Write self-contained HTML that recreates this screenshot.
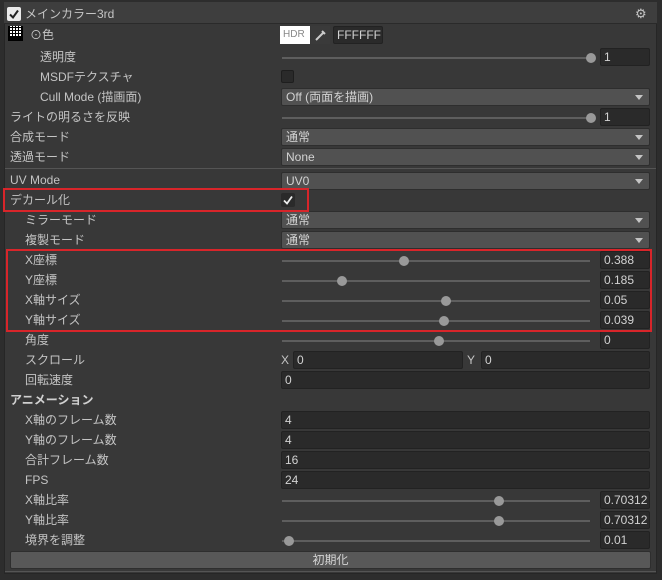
<!DOCTYPE html>
<html><head><meta charset="utf-8"><style>
*{margin:0;padding:0;box-sizing:border-box}
body{width:662px;height:580px;background:#2d2d2d;overflow:hidden;position:relative;font-family:"Liberation Sans","Noto Sans CJK JP",sans-serif;font-size:12px;color:#c4c4c4}
.panel{position:absolute;left:4px;top:2px;width:653px;height:572px;background:#383838;border:1px solid #262626}
.hdr{position:absolute;left:4px;top:2px;width:653px;height:22px;background:#3e3e3e;border-bottom:1px solid #2a2a2a}
.a{position:absolute;white-space:nowrap}
.lab{position:absolute;line-height:20px;height:20px}
.track{position:absolute;height:2px;background:#5e5e5e}
.knob{position:absolute;width:10px;height:10px;border-radius:50%;background:#999}
.fld{position:absolute;height:18px;background:#2a2a2a;border:1px solid #222;border-radius:2px;line-height:16px;padding-left:3px;color:#d2d2d2}
.dd{position:absolute;height:18px;background:#515151;border:1px solid #2e2e2e;border-radius:2px;line-height:16px;padding-left:4px;color:#d2d2d2}
.dd:after{content:"";position:absolute;right:6px;top:6px;border-left:4px solid transparent;border-right:4px solid transparent;border-top:5px solid #c4c4c4}
.red{position:absolute;border:2px solid #d8252a}
</style></head><body>
<div class="panel"></div>
<div class="hdr"></div>
<svg class="a" style="left:7px;top:7px" width="14" height="14"><rect width="14" height="14" rx="2" fill="#eaeaea"/><path d="M3 7.5 L6 10.5 L11 3.5" stroke="#222" stroke-width="2" fill="none"/></svg>
<div class="lab" style="left:25px;top:4px">メインカラー3rd</div>
<div class="a" style="left:635px;top:6px;font-size:13px;color:#c4c4c4">⚙</div>

<div class="a" style="left:8px;top:26px;width:15px;height:15px;background:#000"></div>
<div class="a" style="left:9px;top:26px;width:12px;height:11px;background:#fff;background-image:repeating-linear-gradient(90deg,#000 0 1px,transparent 1px 3px),repeating-linear-gradient(0deg,#000 0 1px,transparent 1px 3px)"></div>
<div class="lab" style="left:30px;top:25px">⊙色</div>
<div class="a" style="left:280px;top:26px;width:30px;height:18px;background:#fff;color:#888;font-size:10px;line-height:18px;padding-left:3px">HDR</div>
<svg class="a" style="left:311px;top:26px" width="19" height="18"><rect width="19" height="18" fill="#3a3a3a"/><path d="M5 14 L12 7 M11 5 L14 8" stroke="#ccc" stroke-width="2"/></svg>
<div class="fld" style="left:333px;top:26px;width:50px;background:#2a2a2a">FFFFFF</div>

<div class="lab" style="left:40px;top:47px">透明度</div>
<div class="lab" style="left:40px;top:67px">MSDFテクスチャ</div>
<div class="a" style="left:281px;top:70px;width:13px;height:13px;background:#2a2a2a;border:1px solid #1e1e1e;border-radius:2px"></div>
<div class="lab" style="left:40px;top:87px">Cull Mode (描画面)</div>
<div class="dd" style="left:281px;top:88px;width:369px">Off (両面を描画)</div>
<div class="lab" style="left:10px;top:107px">ライトの明るさを反映</div>
<div class="lab" style="left:10px;top:127px">合成モード</div>
<div class="dd" style="left:281px;top:128px;width:369px">通常</div>
<div class="lab" style="left:10px;top:147px">透過モード</div>
<div class="dd" style="left:281px;top:148px;width:369px">None</div>
<div class="a" style="left:5px;top:168px;width:651px;height:1px;background:#555"></div>
<div class="lab" style="left:10px;top:170px">UV Mode</div>
<div class="dd" style="left:281px;top:172px;width:369px">UV0</div>
<div class="lab" style="left:10px;top:190px">デカール化</div>
<svg class="a" style="left:281px;top:193px" width="14" height="14"><rect width="14" height="14" rx="2" fill="#2a2a2a"/><path d="M3 7.5 L6 10.5 L11 3.5" stroke="#eee" stroke-width="1.8" fill="none"/></svg>
<div class="lab" style="left:25px;top:210px">ミラーモード</div>
<div class="dd" style="left:281px;top:211px;width:369px">通常</div>
<div class="lab" style="left:25px;top:230px">複製モード</div>
<div class="dd" style="left:281px;top:231px;width:369px">通常</div>
<div class="lab" style="left:25px;top:250px">X座標</div>
<div class="lab" style="left:25px;top:270px">Y座標</div>
<div class="lab" style="left:25px;top:290px">X軸サイズ</div>
<div class="lab" style="left:25px;top:310px">Y軸サイズ</div>
<div class="lab" style="left:25px;top:330px">角度</div>
<div class="lab" style="left:25px;top:350px">スクロール</div>
<div class="lab" style="left:281px;top:350px">X</div>
<div class="fld" style="left:293px;top:351px;width:170px">0</div>
<div class="lab" style="left:467px;top:350px">Y</div>
<div class="fld" style="left:481px;top:351px;width:169px">0</div>
<div class="lab" style="left:25px;top:370px">回転速度</div>
<div class="fld" style="left:281px;top:371px;width:369px">0</div>
<div class="lab" style="left:10px;top:390px;font-weight:bold;color:#d0d0d0">アニメーション</div>
<div class="lab" style="left:25px;top:410px">X軸のフレーム数</div>
<div class="fld" style="left:281px;top:411px;width:369px">4</div>
<div class="lab" style="left:25px;top:430px">Y軸のフレーム数</div>
<div class="fld" style="left:281px;top:431px;width:369px">4</div>
<div class="lab" style="left:25px;top:450px">合計フレーム数</div>
<div class="fld" style="left:281px;top:451px;width:369px">16</div>
<div class="lab" style="left:25px;top:470px">FPS</div>
<div class="fld" style="left:281px;top:471px;width:369px">24</div>
<div class="lab" style="left:25px;top:490px">X軸比率</div>
<div class="lab" style="left:25px;top:510px">Y軸比率</div>
<div class="lab" style="left:25px;top:530px">境界を調整</div>
<div class="a" style="left:10px;top:551px;width:641px;height:18px;background:#585858;border:1px solid #2e2e2e;border-radius:2px;text-align:center;line-height:16px;color:#d4d4d4">初期化</div>
<div class="a" style="left:5px;top:571px;width:651px;height:1px;background:#555"></div>

<div class="track" style="left:282px;top:57px;width:308px"></div><div class="knob" style="left:586px;top:53px"></div><div class="fld" style="left:600px;top:48px;width:50px">1</div>
<div class="track" style="left:282px;top:117px;width:308px"></div><div class="knob" style="left:586px;top:113px"></div><div class="fld" style="left:600px;top:108px;width:50px">1</div>
<div class="track" style="left:282px;top:260px;width:308px"></div><div class="knob" style="left:399px;top:256px"></div><div class="fld" style="left:600px;top:251px;width:50px">0.388</div>
<div class="track" style="left:282px;top:280px;width:308px"></div><div class="knob" style="left:337px;top:276px"></div><div class="fld" style="left:600px;top:271px;width:50px">0.185</div>
<div class="track" style="left:282px;top:300px;width:308px"></div><div class="knob" style="left:441px;top:296px"></div><div class="fld" style="left:600px;top:291px;width:50px">0.05</div>
<div class="track" style="left:282px;top:320px;width:308px"></div><div class="knob" style="left:439px;top:316px"></div><div class="fld" style="left:600px;top:311px;width:50px">0.039</div>
<div class="track" style="left:282px;top:340px;width:308px"></div><div class="knob" style="left:434px;top:336px"></div><div class="fld" style="left:600px;top:331px;width:50px">0</div>
<div class="track" style="left:282px;top:500px;width:308px"></div><div class="knob" style="left:494px;top:496px"></div><div class="fld" style="left:600px;top:491px;width:50px;overflow:hidden">0.70312</div>
<div class="track" style="left:282px;top:520px;width:308px"></div><div class="knob" style="left:494px;top:516px"></div><div class="fld" style="left:600px;top:511px;width:50px;overflow:hidden">0.70312</div>
<div class="track" style="left:282px;top:540px;width:308px"></div><div class="knob" style="left:284px;top:536px"></div><div class="fld" style="left:600px;top:531px;width:50px">0.01</div>

<div class="red" style="left:3px;top:188px;width:306px;height:24px"></div>
<div class="red" style="left:6px;top:249px;width:646px;height:83px"></div>
</body></html>
